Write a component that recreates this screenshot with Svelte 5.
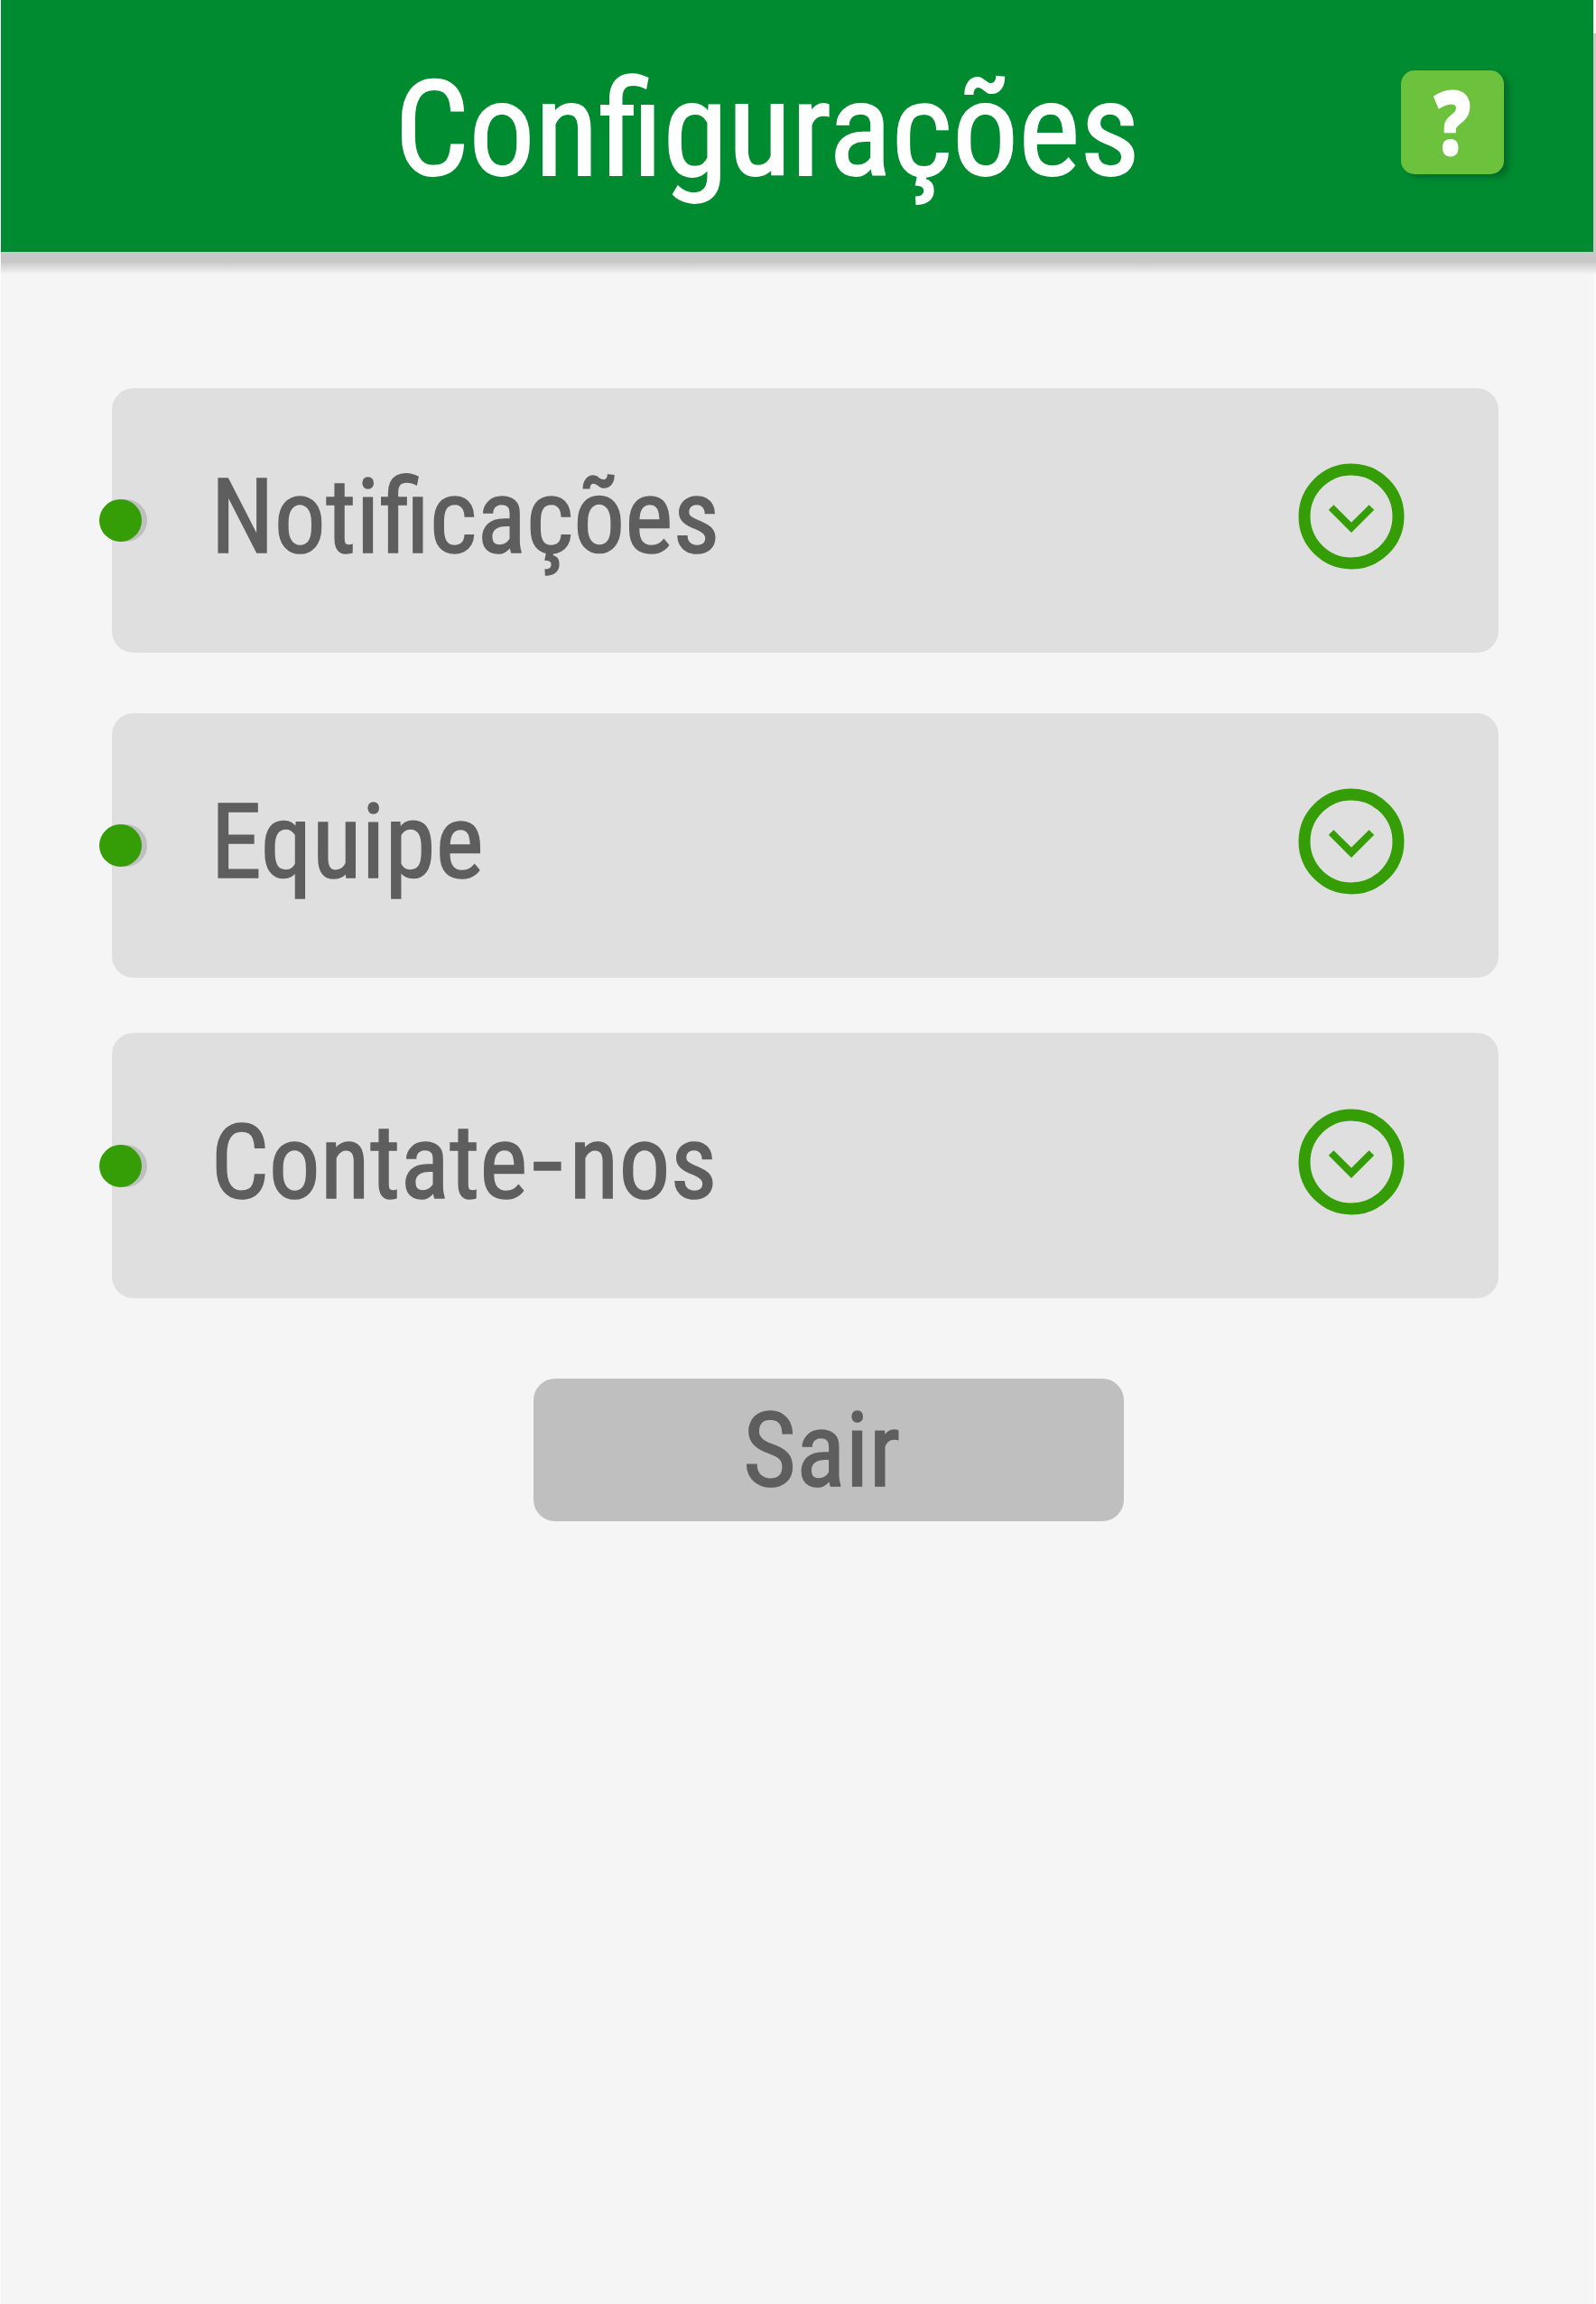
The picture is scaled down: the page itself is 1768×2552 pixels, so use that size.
<script>
  const items = [
    { label: ['Notificações'] },
    { label: ['Equipe'] },
    { label: ['Contate', 'nos'] }
  ];
</script>

<main>
  <header>
    <h1>Configurações</h1>
    <button class="help" aria-label="Ajuda"><span>?</span></button>
  </header>
  <section>
    {#each items as item}
      <article>
        <i></i>
        <h2>{item.label[0]}{#if item.label[1]}<span class="hyphen">-</span>{item.label[1]}{/if}</h2>
        <svg viewBox="0 0 118 118">
          <circle cx="59" cy="59" r="52" />
          <path d="M36.6 49 L59 71.4 L81.4 49" />
        </svg>
      </article>
    {/each}
  </section>
  <button class="exit"><span>Sair</span></button>
</main>

<style>
  :global(body) { margin: 0; background: #fafafa; }
  main { height: 2552px; margin: 0 3px 0 1px; background: #f5f5f5; font-family: "Roboto Condensed", Roboto, sans-serif; font-stretch: 75%; position: relative; z-index: 0; }
  header { height: 279px; background: #008b31; display: flex; }
  /* drop shadow under the bar, peeking out on the right */
  header::after { content: ""; position: absolute; z-index: -1; top: 37px; left: 0; right: -3px; height: 267px; background: linear-gradient(#c8c8c8 253px, #f5f5f5 267px); }
  h1 { margin: 55px 0 0 436px; font-size: 146px; line-height: 180px; font-weight: 400; color: #fff; width: 1115px; transform: scaleX(.997); transform-origin: 0 50%; -webkit-text-stroke: 1.8px #fff; }
  .help { width: 114px; height: 115px; margin-top: 78px; border: 0; border-radius: 15px; background: #6cc23c; color: #fff; font: 800 100px/115px "Open Sans", sans-serif; padding: 0; box-shadow: 6px 4px 6px #006d28; }
  .help span { display: block; transform: translate(0, -2px) scale(.81, 1); -webkit-text-stroke: 1px #fff; }
  section { margin: 151px 105px 0 123px; display: grid; gap: 67px; }
  article { height: 293px; border-radius: 24px; background: #dfdfdf; display: flex; align-items: center; }
  article:last-child { margin-top: -6px; height: 294px; }
  i { width: 47px; height: 47px; border-radius: 50%; background: #359d05; margin-left: -14px; box-shadow: 6px 0 #bfbfbf; }
  h2 { margin: 0 0 8px; padding-left: 77.5px; font-size: 115px; font-weight: 400; color: #5e5e5e; flex: 1; transform: scaleX(.987); transform-origin: 0 50%; -webkit-text-stroke: 1.5px #5e5e5e; }
  .hyphen { display: inline-block; transform: scaleX(1.25); margin: 0 10px 0 8px; }
  svg { width: 118px; margin: 0 104px 9px 0; fill: none; stroke: #359d05; stroke-width: 13; }
  path { stroke-width: 8; }
  .exit { display: block; width: 654px; height: 158px; margin: 89px 0 0 590px; border: 0; border-radius: 24px; background: #bfbfbf; color: #5e5e5e; font: inherit; font-size: 115px; padding: 1px 15px 0 0; -webkit-text-stroke: 1.5px #5e5e5e; }
  .exit span { display: inline-block; transform: scaleX(.99); }
</style>
